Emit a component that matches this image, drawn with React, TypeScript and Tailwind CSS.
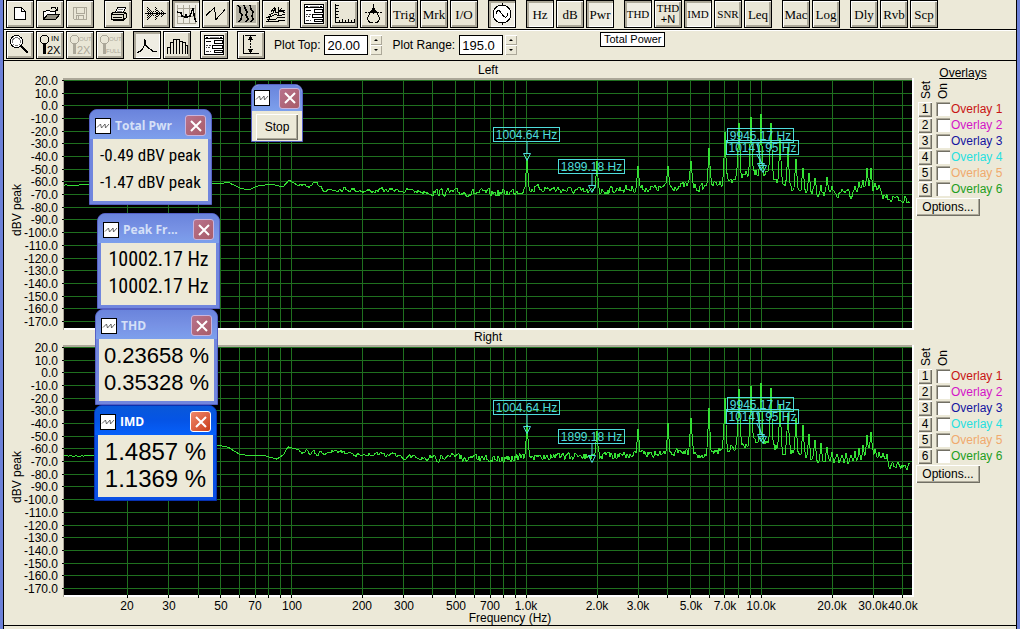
import type { ReactNode } from 'react';
import clsx from 'clsx';

/* ---------- toolbar ---------- */

type ToolProps = { label: string; pressed?: boolean; disabled?: boolean; children: ReactNode };

function Tool({ label, pressed, disabled, children }: ToolProps) {
  return (
    <button
      type="button"
      aria-label={label}
      aria-pressed={pressed}
      disabled={disabled}
      className={clsx(
        'flex h-7 w-7 shrink-0 items-center justify-center overflow-hidden border border-black font-["Liberation_Serif",serif] leading-none text-black',
        pressed
          ? 'bg-[#efede3] shadow-[inset_2px_2px_0_#aca899,inset_-1px_-1px_0_#fff]'
          : 'bg-[#e9e6d6] shadow-[inset_1px_1px_0_#fff,inset_-2px_-2px_0_#aca899]'
      )}
    >
      {children}
    </button>
  );
}

function Icon({ children, color = '#000' }: { children: ReactNode; color?: string }) {
  return (
    <svg
      viewBox="1 1 26 26"
      className="h-[26px] w-[26px]"
      fill="none"
      stroke={color}
      strokeWidth="1"
      shapeRendering="crispEdges"
    >
      {children}
    </svg>
  );
}

function Word({ children }: { children: string }) {
  return <span className="text-[13px]">{children}</span>;
}

function Caps({ children }: { children: string }) {
  return <span className="text-[11px]">{children}</span>;
}

function Group({ children }: { children: ReactNode }) {
  return <div className="flex gap-0.5">{children}</div>;
}

function PanelIcon() {
  return (
    <Icon>
      <rect x="4.5" y="4.5" width="19" height="19" fill="#fff" />
      <path d="M4 7.5h20M6 6h2M20 6h2" />
      <path d="M10 6h9" stroke="#888" />
      <path d="M6 10.5h5" />
      <path d="M6 14.5h2M9 14.5h2M6 16.5h1M8 16.5h2M6 20.5h3M10 20.5h1" stroke="#444" />
      <rect x="14.5" y="9.5" width="8" height="3" />
      <rect x="12.5" y="14.5" width="10" height="3" />
      <rect x="14.5" y="19.5" width="8" height="2" />
    </Icon>
  );
}

function ZoomIcon({ top, bottom, color = '#000' }: { top: string; bottom: string; color?: string }) {
  const half = bottom === '2X';
  return (
    <Icon color={color}>
      <path d="M6.5 4.5h4l2 2v4l-2 2h-4l-2-2v-4z" />
      <path d="M8.5 13v10" strokeWidth="3" />
      <g fill={color} stroke="none" fontFamily="Liberation Sans, sans-serif">
        <text x={top === 'IN' ? 15 : 13} y="10" fontSize={top === 'IN' ? 8 : 6}>{top}</text>
        <text x={half ? 11 : 10} y={half ? 23 : 22} fontSize={half ? 11 : 6}>{bottom}</text>
      </g>
    </Icon>
  );
}

function MainToolbar() {
  return (
    <div role="toolbar" aria-label="Main" className="flex h-[30px] gap-2.5 border-b border-black px-0.5">
      <Group>
        <Tool label="New">
          <Icon><path d="M8.5 7.5h7l4 4v8h-11z" fill="#fff" /><path d="M15.5 7.5v4h4" /></Icon>
        </Tool>
        <Tool label="Open">
          <Icon>
            <path d="M7.5 19.5v-8h2l1-1h3l1 1h5v3" fill="#fff" />
            <path d="M7.5 19.5l4-5h12l-4 5z" fill="#8f8c7e" />
            <path d="M15 8.5l1-1h3l2 3M21.5 7v3.5h-3" />
          </Icon>
        </Tool>
        <Tool label="Save" disabled>
          <Icon color="#aca899">
            <path d="M7.5 7.5h13v12h-12l-1-1z" />
            <path d="M10.5 7.5v6h8v-6M10.5 19.5v-4h7v4M12.5 16v3" />
          </Icon>
        </Tool>
      </Group>
      <Group>
        <Tool label="Print">
          <Icon>
            <path d="M11.5 12.5l2-5h8l-2 5z" fill="#fff" />
            <path d="M14 9.5h5M13 11h5" stroke="#777" />
            <path d="M7.500 13.5l2-1h11l2 1v4l-3 2h-12z" fill="#e0ddce" />
            <path d="M7.5 14.5h12l3-2M19.5 14v5M9 17.5h9M9 20.5h10l4-3" />
          </Icon>
        </Tool>
      </Group>
      <Group>
        <Tool label="Waveform">
          <Icon>
            <path d="M3 13.5h21" />
            <g strokeDasharray="1 1">
              <path d="M5.5 7v14M6.5 8v12M7.5 9v10M8.5 10v8M9.5 11v6M10.5 12v4M11.5 11v5" />
              <path d="M13.5 7v14M14.5 8v12M15.5 10v8M16.5 11v6M17.5 12v4" />
              <path d="M19.5 10v8M20.5 11v6M21.5 12v4" />
            </g>
          </Icon>
        </Tool>
        <Tool label="Spectrum" pressed>
          <Icon>
            <path d="M5.5 5v19M11.5 5v19M17.5 5v19M23.5 5v19M5 8.5h19M5 16.5h19M5 23.5h19" stroke="#aca899" />
            <path d="M5 12l4 1 1 3 3 1 1-2 1 2 3-1 3-8 1 7 2 7" strokeWidth="1.5" />
          </Icon>
        </Tool>
        <Tool label="Time series">
          <Icon><path d="M4 15.5l8.500-8 1.500 12 9-10" /></Icon>
        </Tool>
        <Tool label="Spectrogram">
          <Icon>
            <rect x="4" y="5" width="20" height="18" fill="#b5b2a4" stroke="none" />
            <path d="M6 5l2 3v4l2 3-1 4-2 3M12 5l1 3 2 4-1 3 2 4-2 3M18 5l1 4 2 3-1 4 1 3-2 3" strokeWidth="1.500" />
          </Icon>
        </Tool>
        <Tool label="3D surface">
          <Icon>
            <path d="M4 21.500h11l3-1h5M5 19.500h8l3-2h7M4 17.500l5-1 4-2 4 1 6-1M7 14.500l4-1 2-6 1 5 6-1 3 1M9 12l3-4M17 7l-1 9M20 8l-2 2h5M6 22l3-8" />
          </Icon>
        </Tool>
      </Group>
      <Group>
        <Tool label="Settings"><PanelIcon /></Tool>
        <Tool label="Scaling">
          <Icon>
            <path d="M5.5 4v18.500h19M6 5.500h3M6 8.500h2M6 11.500h3M6 14.500h2M6 17.500h3M9.500 22v-2M12.500 22v-3M15.500 22v-2M18.500 22v-3M21.500 22v-2M24 22v-3" />
          </Icon>
        </Tool>
        <Tool label="Calibration">
          <Icon>
            <path d="M13.500 4v10" strokeWidth="1" />
            <path d="M5 12.500h18" strokeDasharray="2 1" />
            <path d="M13.500 7l-5 9q-2 4 1 6h3M13.500 7l5 9q2 4-1 6h-3" />
            <path d="M12 9h3v3h-3z" fill="#000" stroke="none" />
          </Icon>
        </Tool>
        <Tool label="Triggering"><Word>Trig</Word></Tool>
        <Tool label="Markers"><Word>Mrk</Word></Tool>
        <Tool label="Input/Output"><Word>I/O</Word></Tool>
      </Group>
      <Group>
        <Tool label="Signal generator" pressed>
          <Icon>
            <circle cx="14" cy="14" r="9" fill="#fff" />
            <path d="M14.5 3v3M14.5 22v3" />
            <path d="M8 14q1.500-5 3.500-3t3 4 3 2 2.500-3.500" />
          </Icon>
        </Tool>
      </Group>
      <Group>
        <Tool label="Peak frequency" pressed><Word>Hz</Word></Tool>
        <Tool label="Peak amplitude"><Word>dB</Word></Tool>
        <Tool label="Power" pressed><Word>Pwr</Word></Tool>
      </Group>
      <Group>
        <Tool label="THD" pressed><Caps>THD</Caps></Tool>
        <Tool label="THD+N">
          <span className="flex flex-col text-[11px]">
            THD
            <span className='font-["Liberation_Sans",sans-serif]'>+N</span>
          </span>
        </Tool>
        <Tool label="IMD" pressed><Caps>IMD</Caps></Tool>
        <Tool label="SNR"><Caps>SNR</Caps></Tool>
        <Tool label="Leq"><Word>Leq</Word></Tool>
      </Group>
      <Group>
        <Tool label="Macro"><Word>Mac</Word></Tool>
        <Tool label="Logging"><Word>Log</Word></Tool>
      </Group>
      <Group>
        <Tool label="Delay"><Word>Dly</Word></Tool>
        <Tool label="Reverb"><Word>Rvb</Word></Tool>
        <Tool label="Scope"><Word>Scp</Word></Tool>
      </Group>
    </div>
  );
}

function NumberField({ id, label, value }: { id: string; label: string; value: string }) {
  const step =
    'flex h-2.5 w-3 items-center justify-center bg-[#ece9d8] shadow-[inset_1px_1px_0_#fff,inset_-1px_-1px_0_#aca899]';
  return (
    <div className="flex items-center">
      <label htmlFor={id} className="text-xs">{label}</label>
      <input
        id={id}
        defaultValue={value}
        className="ml-1 h-5 w-11 border border-black bg-white pl-0.5 text-[13px] leading-none outline-none"
      />
      <div className="ml-0.5 flex flex-col">
        <button type="button" aria-label={`${label} up`} className={step}>
          <svg viewBox="0 0 4 2" className="h-0.5 w-1"><path d="M0 2l2-2 2 2z" /></svg>
        </button>
        <button type="button" aria-label={`${label} down`} className={step}>
          <svg viewBox="0 0 4 2" className="h-0.5 w-1"><path d="M0 0l2 2 2-2z" /></svg>
        </button>
      </div>
    </div>
  );
}

function PlotToolbar() {
  return (
    <div role="toolbar" aria-label="Plot" className="relative flex h-[31px] items-start gap-[9px] border-b border-black px-0.5 pt-px shadow-[inset_0_1px_0_#fff]">
      <Group>
        <Tool label="Zoom">
          <Icon>
            <circle cx="10.5" cy="10.5" r="6" fill="#fff" />
            <circle cx="10.5" cy="10.5" r="4" stroke="#777" />
            <path d="M15 15l7 7" strokeWidth="2.5" />
          </Icon>
        </Tool>
        <Tool label="Zoom in 2x"><ZoomIcon top="IN" bottom="2X" /></Tool>
        <Tool label="Zoom out 2x" disabled><ZoomIcon top="OUT" bottom="2X" color="#aca899" /></Tool>
        <Tool label="Zoom out full" disabled><ZoomIcon top="OUT" bottom="FULL" color="#aca899" /></Tool>
      </Group>
      <Group>
        <Tool label="Line graph" pressed>
          <Icon><path d="M4 21.5l3-1 2-2 2-3 1-7 1 6 3 3 2 1 2 2h4" /></Icon>
        </Tool>
        <Tool label="Bar graph">
          <Icon>
            <path d="M4.5 23v-7h3v7M7.5 16v-5h3v12M10.5 11v-3h3v15M13.5 8h3v15M16.5 10h3v13M19.5 11h3v12M22.5 14h2v9" />
          </Icon>
        </Tool>
      </Group>
      <Group>
        <Tool label="Display options"><PanelIcon /></Tool>
      </Group>
      <Group>
        <Tool label="Auto scale">
          <Icon>
            <path d="M6.5 4v18.500h15M8 4.500h11" />
            <path d="M13.5 6v15" strokeDasharray="2 1" />
            <path d="M13.5 5l3 4h-6zM13.5 22l3-4h-6z" fill="#000" stroke="none" />
          </Icon>
        </Tool>
      </Group>
      <div className="flex h-7 items-center gap-2.5">
        <NumberField id="plot-top" label="Plot Top:" value="20.00" />
        <NumberField id="plot-range" label="Plot Range:" value="195.0" />
      </div>
      <div role="tooltip" className="absolute left-[596px] top-0.5 border border-black bg-white px-[3px] text-[11px] leading-[13px]">
        Total Power
      </div>
    </div>
  );
}

/* ---------- spectrum plots ---------- */

const LEFT = 64;
const RIGHT = 912;
const HEIGHT = 248;
const DB_STEP = 12.68;

const freqX = (hz: number) => 291.5 + 234.9 * (Math.log10(hz) - 2);

const gridFreqs = [10, 100, 1000, 10000]
  .flatMap((d) => [1, 2, 3, 4, 5, 6, 7, 8, 9].map((n) => n * d))
  .filter((f) => f >= 20 && f <= 40000);

const freqLabels: [number, string][] = [
  [20, '20'], [30, '30'], [50, '50'], [70, '70'], [100, '100'], [200, '200'], [300, '300'],
  [500, '500'], [700, '700'], [1000, '1.0k'], [2000, '2.0k'], [3000, '3.0k'], [5000, '5.0k'],
  [7000, '7.0k'], [10000, '10.0k'], [20000, '20.0k'], [30000, '30.0k'], [40000, '40.0k'],
];

type Point = [number, number];
type Marker = { text: string; x: number; y: number; w: number; tip: Point };
type Channel = { name: string; seed: number; base: Point[]; peaks: Point[]; markers: Marker[] };

const left: Channel = {
  name: 'Left',
  seed: 7,
  base: [
    [64, 105], [80, 105], [90, 104], [213, 103], [220, 104], [228, 102], [234, 105], [240, 108], [248, 110],
    [258, 106], [269, 104], [283, 107], [289, 100], [297, 105], [305, 107], [320, 105], [326, 110], [340, 108],
    [370, 111], [400, 110], [430, 112], [480, 113], [505, 113], [522, 110], [540, 108], [590, 112], [620, 109],
    [660, 108], [690, 105], [700, 108], [723, 102], [737, 98], [746, 95], [755, 93], [768, 95], [778, 103],
    [790, 107], [803, 110], [817, 115], [860, 115], [870, 110], [882, 116], [897, 119], [910, 120],
  ],
  peaks: [
    [1004, 78], [2000, 81], [3000, 86], [4000, 86], [5000, 81], [6000, 68], [7000, 52], [8000, 43], [9000, 37],
    [10000, 34], [11000, 43], [12000, 58], [13000, 68], [14000, 79], [15000, 88], [16000, 93], [17000, 98],
    [18000, 105], [19000, 97], [20000, 106], [22000, 109], [23500, 109], [25000, 106], [26000, 102],
    [27000, 100], [28300, 88], [29400, 88], [30600, 103], [31800, 105],
  ],
  markers: [
    { text: '1004.64 Hz', x: 493, y: 47, w: 67, tip: [527, 81] },
    { text: '1899.18 Hz', x: 558, y: 79, w: 67, tip: [592, 113] },
    { text: '9945.17 Hz', x: 727, y: 48, w: 67, tip: [761, 91] },
    { text: '10141.95 Hz', x: 726, y: 60, w: 73, tip: [763, 93] },
  ],
};

const right: Channel = {
  name: 'Right',
  seed: 31,
  base: [
    [64, 109], [84, 109], [92, 108], [200, 104], [217, 98], [228, 100], [234, 104], [239, 107], [250, 109],
    [262, 108], [270, 110], [277, 112], [284, 107], [288, 100], [300, 103], [316, 107], [326, 104], [340, 106],
    [380, 108], [430, 111], [480, 111], [505, 112], [522, 110], [540, 109], [590, 110], [640, 107], [690, 105],
    [699, 108], [723, 102], [737, 100], [746, 98], [755, 95], [768, 95], [778, 102], [790, 105], [803, 111],
    [817, 115], [860, 116], [870, 108], [880, 115], [892, 118], [910, 119],
  ],
  peaks: [
    [1004, 78], [2000, 84], [3000, 82], [4000, 76], [5000, 71], [6000, 61], [7000, 51], [8000, 42], [9000, 39],
    [10000, 36], [11000, 41], [12000, 57], [13000, 66], [14000, 71], [15000, 78], [16000, 87], [17000, 93],
    [18000, 96], [19000, 100], [20000, 105], [21000, 107], [22000, 108], [23000, 106], [24000, 108],
    [25000, 104], [26000, 101], [27000, 98], [28300, 88], [29400, 85], [30600, 102], [31800, 105], [33000, 106],
    [34300, 107],
  ],
  markers: [
    { text: '1004.64 Hz', x: 493, y: 53, w: 67, tip: [527, 87] },
    { text: '1899.18 Hz', x: 558, y: 82, w: 67, tip: [592, 116] },
    { text: '9945.17 Hz', x: 727, y: 50, w: 67, tip: [761, 95] },
    { text: '10141.95 Hz', x: 726, y: 62, w: 73, tip: [763, 97] },
  ],
};

function tracePoints({ base, peaks, seed }: Channel) {
  let s = seed;
  const rand = () => {
    s = (s * 16807) % 2147483647;
    return s / 2147483647 - 0.5;
  };
  rand();
  const out: string[] = [];
  let i = 0;
  let drift = 0;
  const tops = peaks.map(([f, y]) => [Math.round(freqX(f)), y]);
  for (let x = LEFT; x < RIGHT - 1; x++) {
    while (i < base.length - 2 && x > base[i + 1][0]) i++;
    const [x0, y0] = base[i];
    const [x1, y1] = base[i + 1];
    let y = y0 + (y1 - y0) * Math.min(1, (x - x0) / (x1 - x0));
    // the low end has few FFT bins, so it is smooth
    const amp = x < 300 ? 0.3 : x < 430 ? 4 : 7;
    const keep = x < 430 ? 0.6 : 0.3;
    drift = drift * keep + rand() * amp;
    y += drift;
    for (const [px, top] of tops) {
      const d = Math.abs(x - px);
      const weight = d === 0 ? 1 : d === 1 ? 0.5 : d === 2 ? 0.12 : 0;
      if (weight) y = Math.min(y, y + (top - y) * weight);
    }
    out.push(`${x},${y.toFixed(1)}`);
  }
  return out.join(' ');
}

function SpectrumPlot({ channel, top, height, axis }: { channel: Channel; top: number; height: number; axis?: boolean }) {
  return (
    <svg
      viewBox={`4 0 910 ${height}`}
      className='block h-auto w-full overflow-visible font-["Liberation_Sans",sans-serif] text-xs'
      role="img"
      aria-label={`${channel.name} spectrum`}
    >
      <g transform={`translate(0 ${top})`}>
        <text x="488" y="-6" textAnchor="middle">{channel.name}</text>
        <text transform="translate(21 130) rotate(-90)" textAnchor="middle">dBV peak</text>
        <g shapeRendering="crispEdges">
          <rect x={LEFT - 1} y="-2" width={RIGHT - LEFT + 3} height={HEIGHT + 4} fill="#fff" />
          <path d={`M${LEFT - 1} -2h${RIGHT - LEFT + 1}v2h-${RIGHT - LEFT}v${HEIGHT + 2}h-1z`} fill="#aca899" />
          <rect x={LEFT} y="0" width={RIGHT - LEFT} height={HEIGHT} fill="#000" />
          {Array.from({ length: 20 }, (_, n) => {
            const y = Math.round(n * DB_STEP) + 0.5;
            return (
              <g key={n}>
                <path d={`M${LEFT} ${y}H${RIGHT}`} stroke="#1f701f" />
                <path d={`M${LEFT - 2} ${y}h2`} stroke="#000" />
              </g>
            );
          })}
          {gridFreqs.map((f) => {
            const x = Math.floor(freqX(f)) + 0.5;
            return (
              <g key={f}>
                <path d={`M${x} 0v${HEIGHT}`} stroke="#1f701f" />
                {axis && <path d={`M${x} ${HEIGHT}v3`} stroke="#000" />}
              </g>
            );
          })}
          <polyline points={tracePoints(channel)} fill="none" stroke="#35e035" />
        </g>
        {Array.from({ length: 20 }, (_, n) => (
          <text key={n} x="58" y={Math.round(n * DB_STEP) + 5} textAnchor="end">
            {(20 - n * 10).toFixed(1)}
          </text>
        ))}
        {channel.markers.map((m) => (
          <g key={m.text} stroke="#4fdcdc">
            <rect x={m.x + 0.5} y={m.y + 0.5} width={m.w - 1} height="14" fill="none" />
            <path d={`M${m.x > 700 ? 757 : m.tip[0]} ${m.y + 15}L${m.tip[0]} ${m.tip[1] - 8}`} />
            <path d={`M${m.tip[0] - 3.5} ${m.tip[1] - 7.5}h7l-3.5 7z`} fill="none" />
            <text x={m.x + m.w / 2} y={m.y + 12} textAnchor="middle" fill="#4fdcdc" stroke="none">{m.text}</text>
          </g>
        ))}
        {axis && (
          <>
            {freqLabels.map(([f, label]) => (
              <text key={f} x={Math.round(freqX(f))} y="263" textAnchor="middle">{label}</text>
            ))}
            <text x="510" y="275" textAnchor="middle">Frequency (Hz)</text>
          </>
        )}
      </g>
    </svg>
  );
}

const overlayColors = [
  'text-[#c81414]',
  'text-[#d414c8]',
  'text-[#1414a0]',
  'text-[#28e0e0]',
  'text-[#f0aa6e]',
  'text-[#1e9e1e]',
];

const raised = 'bg-[#ece9d8] shadow-[inset_1px_1px_0_#fff,inset_-1px_-1px_0_#716f64,inset_-2px_-2px_0_#aca899]';

function OverlayPanel({ channel, heading }: { channel: string; heading?: boolean }) {
  return (
    <aside className={clsx('w-[102px] shrink-0 text-xs leading-4', heading ? 'pt-1' : 'pt-[19px]')}>
      {heading && <h2 className="pr-1 text-center underline">Overlays</h2>}
      <div className="flex h-5 items-start gap-px pl-1">
        <span className="h-[18px] [writing-mode:vertical-rl] rotate-180">Set</span>
        <span className="h-[18px] [writing-mode:vertical-rl] rotate-180">On</span>
      </div>
      {overlayColors.map((color, n) => (
        <div key={color} className="flex h-4 items-center pl-1">
          <button type="button" aria-label={`Set overlay ${n + 1}`} className={clsx('h-[15px] w-3.5 leading-[14px]', raised)}>
            {n + 1}
          </button>
          <input
            id={`${channel}-${n}`}
            type="checkbox"
            className="ml-1 h-3.5 w-3.5 appearance-none bg-white shadow-[inset_1px_1px_0_#aca899,inset_2px_2px_0_#716f64]"
          />
          <label htmlFor={`${channel}-${n}`} className={clsx('ml-px whitespace-nowrap', color)}>
            Overlay {n + 1}
          </label>
        </div>
      ))}
      <button type="button" className={clsx('ml-0.5 mt-px h-[18px] w-16 text-xs leading-none', raised)}>
        Options...
      </button>
    </aside>
  );
}

/* ---------- floating meters ---------- */

function CloseButton({ active }: { active?: boolean }) {
  return (
    <button
      type="button"
      aria-label="Close"
      className={clsx(
        'flex h-[21px] w-[21px] shrink-0 items-center justify-center rounded-[3px] border',
        active
          ? 'border-white bg-linear-to-br from-[#f0886a] to-[#c83a14]'
          : 'border-[#c9b4dc] bg-linear-to-br from-[#b8728c] to-[#a85c68]'
      )}
    >
      <svg viewBox="0 0 12 12" className="h-3 w-3" stroke="#fff" strokeWidth="2">
        <path d="M1 1l10 10M11 1L1 11" />
      </svg>
    </button>
  );
}

function TitleIcon() {
  return (
    <svg viewBox="0 0 16 16" className="h-4 w-4 shrink-0" fill="none" stroke="#000">
      <rect x="0.5" y="0.5" width="15" height="15" fill="#fff" />
      <path d="M2 9.5L5.5 6l1 4L10 6l.5 4L14 6" stroke="#555" strokeWidth="0.9" />
    </svg>
  );
}

type MeterProps = { title: string; place: string; text: string; values: string[]; active?: boolean };

function Meter({ title, place, text, values, active }: MeterProps) {
  return (
    <section
      className={clsx(
        'absolute w-[123px] rounded-t-lg border px-[3px] pb-[3px]',
        place,
        active ? 'border-[#0831b0] bg-[#0a50e4]' : 'border-[#5560c4] bg-[#7186de]'
      )}
    >
      <header
        className={clsx(
          '-mx-[3px] flex h-[29px] items-center gap-1 rounded-t-[7px] pl-[5px] pr-[5px] pt-0.5',
          active ? 'bg-linear-to-b from-[#0a58d8] via-[#0554e6] to-[#0660fa]' : 'bg-linear-to-b from-[#6a84dc] via-[#7791e4] to-[#7da0ec]'
        )}
      >
        <TitleIcon />
        <h2
          className={clsx(
            'min-w-0 grow whitespace-nowrap font-["Open_Sans",sans-serif] text-xs font-bold',
            active ? 'text-white' : 'text-[#d5e0f7]'
          )}
        >
          {title}
        </h2>
        <CloseButton active={active} />
      </header>
      <div className={clsx('h-[62px] whitespace-nowrap bg-[#ece9d8] pt-[3px] text-center leading-[27px]', text)}>
        {values.map((v, n) => <p key={n}>{v}</p>)}
      </div>
    </section>
  );
}

export default function App() {
  return (
    <div className='relative min-h-screen border-x-[3px] border-[#6c80d8] bg-[#ece9d8] font-["Liberation_Sans",sans-serif] text-black'>
      <div className="min-h-screen overflow-hidden border-x border-black">
        <MainToolbar />
        <PlotToolbar />
        <main className="border-b border-black">
          <div className="flex">
            <div className="min-w-0 grow"><SpectrumPlot channel={left} top={19} height={268} /></div>
            <OverlayPanel channel="left" heading />
          </div>
          <div className="flex">
            <div className="min-w-0 grow"><SpectrumPlot channel={right} top={18} height={296} axis /></div>
            <OverlayPanel channel="right" />
          </div>
        </main>
      </div>

      <section className="absolute left-[248px] top-[84px] w-[52px] rounded-t-lg border border-[#5560c4] bg-[#ece9d8]">
        <header className="flex h-[26px] items-center justify-between rounded-t-[7px] bg-linear-to-b from-[#6a84dc] to-[#7da0ec] px-0.5">
          <TitleIcon />
          <CloseButton />
        </header>
        <div className="flex justify-center pb-px pt-[3px]">
          <button type="button" className={clsx('h-[26px] w-[42px] text-xs', raised)}>Stop</button>
        </div>
      </section>

      <Meter title="Total Pwr" place="left-[86px] top-[109px]" text='font-["Roboto_Condensed","Liberation_Sans",sans-serif] text-[17px]' values={['-0.49 dBV peak', '-1.47 dBV peak']} />
      <Meter title="Peak Fr..." place="left-[94px] top-[213px]" text='font-["Roboto_Condensed","Liberation_Sans",sans-serif] text-[20px]' values={['10002.17 Hz', '10002.17 Hz']} />
      <Meter title="THD" place="left-[92px] top-[309px]" text="text-[22px]" values={['0.23658 %', '0.35328 %']} />
      <Meter title="IMD" place="left-[91px] top-[405px]" text="text-[24px]" values={['1.4857 %', '1.1369 %']} active />
    </div>
  );
}
